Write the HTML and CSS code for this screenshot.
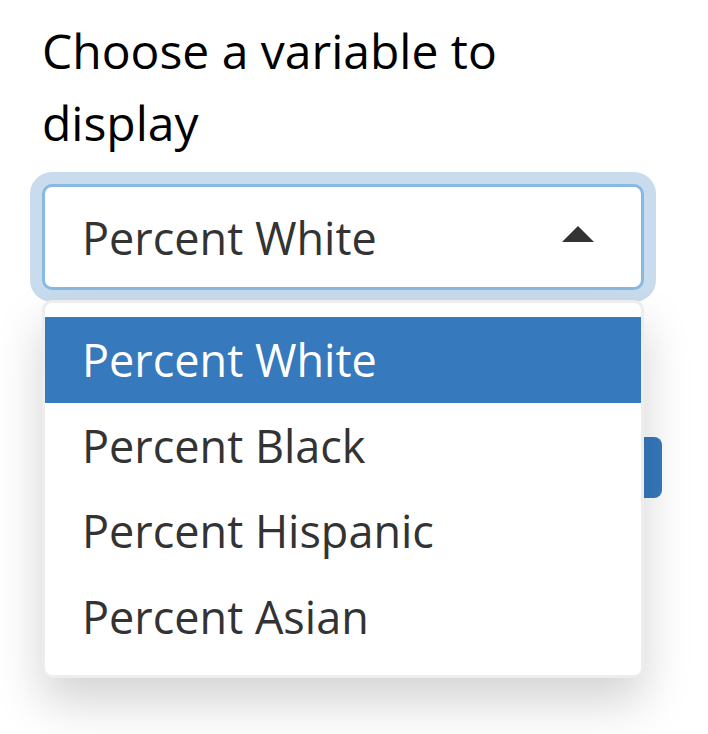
FILE: index.html
```html
<!DOCTYPE html>
<html lang="en">
<head>
    <meta charset="UTF-8">
    <meta name="viewport" content="width=device-width, initial-scale=1.0">
    <title>Variable Picker</title>
    <link rel="stylesheet" href="styles.css">
</head>
<body>
    <div class="container">
        <div class="form-group">
            <label class="control-label" for="var">Choose a variable to display</label>
            <div class="selectize">
                <div class="selectize-input">
                    <span class="item">Percent White</span>
                    <span class="caret"></span>
                </div>
                <div class="selectize-dropdown">
                    <div class="option active">Percent White</div>
                    <div class="option">Percent Black</div>
                    <div class="option">Percent Hispanic</div>
                    <div class="option">Percent Asian</div>
                </div>
            </div>
        </div>

        <button class="btn" aria-label="Update"></button>
    </div>
</body>
</html>
```

FILE: styles.css
```css
html, body {
    min-height: 734px;
}
body {
    margin: 0;
    background: #fff;
    font-family: "Open Sans", "Noto Sans", sans-serif;
}
.container {
    width: 620px;
    padding: 15px 0 0 42px;
}
.form-group {
    width: 602px;
}
.control-label {
    display: block;
    font-size: 48px;
    line-height: 72px;
    color: #000;
    margin-bottom: 25px;
}
.selectize {
    position: relative;
}
.selectize-input {
    display: flex;
    align-items: center;
    justify-content: space-between;
    height: 100px;
    padding: 0 47px 0 37px;
    border: 3px solid #88b9e2;
    border-radius: 10px;
    box-shadow: 0 0 0 12px #c9dcee;
    font-size: 45px;
    color: #333;
    background: #fff;
}
.caret {
    width: 0;
    height: 0;
    margin-top: -6px;
    border-left: 16px solid transparent;
    border-right: 16px solid transparent;
    border-bottom: 16px solid #333;
}
.selectize-dropdown {
    position: absolute;
    top: 100%;
    left: 0;
    right: 0;
    z-index: 10;
    margin-top: 10px;
    padding: 14px 0 16px;
    background: #fff;
    border: 3px solid rgba(0, 0, 0, 0.07);
    border-radius: 10px;
    box-shadow: 0 24px 48px rgba(0, 0, 0, 0.175);
}
.option {
    padding: 9px 37px;
    font-size: 45px;
    line-height: 67.5px;
    color: #333;
}
.option.active {
    background: #3679bc;
    color: #fff;
}
.btn {
    display: block;
    width: 620px;
    height: 61px;
    margin-top: 147px;
    border: none;
    border-radius: 8px;
    background: #3679bc;
}
```
